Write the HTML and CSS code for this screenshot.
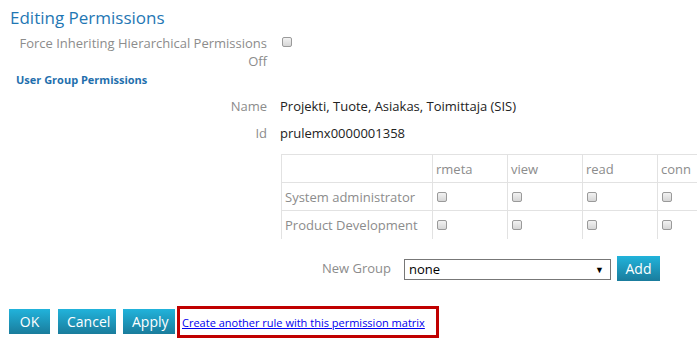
FILE: index.html
```html
<!DOCTYPE html>
<html lang="en">
<head>
  <meta charset="UTF-8" />
  <title>Editing Permissions</title>
  <link rel="stylesheet" href="styles.css">
</head>
<body>
  <div class="page">
    <h1>Editing Permissions</h1>
    <div class="field">
      <label class="label">Force Inheriting Hierarchical Permissions<br>Off</label>
      <div class="value"><input type="checkbox" class="chk"></div>
    </div>
    <h2>User Group Permissions</h2>
    <div class="field info">
      <span class="label">Name</span>
      <span class="value">Projekti, Tuote, Asiakas, Toimittaja (SIS)</span>
    </div>
    <div class="field info">
      <span class="label">Id</span>
      <span class="value">prulemx0000001358</span>
    </div>
    <div class="matrix-wrap">
      <table class="matrix">
        <tr>
          <th></th><th>rmeta</th><th>view</th><th>read</th><th>conn</th>
        </tr>
        <tr>
          <td>System administrator</td>
          <td><input type="checkbox" class="chk"></td>
          <td><input type="checkbox" class="chk"></td>
          <td><input type="checkbox" class="chk"></td>
          <td><input type="checkbox" class="chk"></td>
        </tr>
        <tr>
          <td>Product Development</td>
          <td><input type="checkbox" class="chk"></td>
          <td><input type="checkbox" class="chk"></td>
          <td><input type="checkbox" class="chk"></td>
          <td><input type="checkbox" class="chk"></td>
        </tr>
      </table>
      <div class="new-group">
        <span class="ng-label">New Group</span>
        <div class="select">none<span class="arrow">&#9660;</span></div>
        <button class="btn">Add</button>
      </div>
    </div>
    <div class="actions">
      <button class="btn">OK</button>
      <button class="btn">Cancel</button>
      <button class="btn">Apply</button>
      <div class="highlight"><a href="#">Create another rule with this permission matrix</a></div>
    </div>
  </div>
</body>
</html>
```

FILE: styles.css
```css
* { margin: 0; padding: 0; box-sizing: border-box; }
body {
  font-family: 'Open Sans', sans-serif;
  font-size: 13px;
  color: #333;
  background: #fff;
  overflow: hidden;
}
.page {
  padding: 6px 0 0 10px;
}
h1 {
  font-size: 17px;
  font-weight: 400;
  color: #1f77b4;
  line-height: 24px;
}
h2 {
  font-size: 11px;
  font-weight: 700;
  color: #1f6fad;
  margin: 2px 0 0 6px;
  line-height: 16px;
}
.field {
  display: grid;
  grid-template-columns: 257px 1fr;
  column-gap: 13px;
  margin-top: 4px;
}
.label {
  text-align: right;
  color: #8c8c8c;
  line-height: 18px;
}
.value { line-height: 18px; }
.info { margin-top: 9px; }
.info .value { color: #222; }
.chk {
  appearance: none;
  -webkit-appearance: none;
  width: 10px;
  height: 10px;
  border: 1px solid #9a9a9a;
  border-radius: 2px;
  background: linear-gradient(#f2f2f2, #d6d6d6);
  display: inline-block;
  vertical-align: middle;
  margin-left: 2px;
}
.field .chk { margin-top: -6px; }
.matrix-wrap {
  margin: 12px 0 0 271px;
}
.matrix {
  border-collapse: collapse;
  table-layout: fixed;
  width: 452px;
}
.matrix th, .matrix td {
  border: 1px solid #e2e2e2;
  height: 28px;
  width: 75px;
  padding: 0 3px;
  text-align: left;
  font-weight: 400;
  color: #8c8c8c;
  white-space: nowrap;
}
.matrix th:first-child, .matrix td:first-child { width: 151px; }
.matrix td .chk { margin-left: 1px; margin-top: -3px; }
.matrix tr:last-child td { border-bottom: none; }
.new-group {
  display: flex;
  align-items: center;
  margin: 17px 0 0 41px;
}
.ng-label {
  color: #8c8c8c;
  width: 70px;
  margin-right: 12px;
}
.select {
  width: 207px;
  height: 21px;
  border: 1px solid #777;
  color: #000;
  padding: 0 6px 0 4px;
  line-height: 19px;
  display: flex;
  justify-content: space-between;
  margin-top: 3px;
}
.arrow { font-size: 9px; }
.btn {
  font-family: 'Open Sans', sans-serif;
  font-size: 14px;
  color: #fff;
  border: none;
  background: linear-gradient(#21b3db, #1a7c9c);
  height: 25px;
  padding: 0 9px;
}
.new-group .btn { margin-left: 6px; width: 43px; padding: 0; }
.actions {
  display: flex;
  align-items: center;
  gap: 8px;
  margin: 25px 0 0 -1px;
}
.actions .btn:first-child { width: 41px; }
.actions .btn:nth-child(2) { width: 58px; }
.actions .btn:nth-child(3) { width: 52px; margin-left: -1px; }
.highlight {
  border: 3px solid #c00000;
  width: 262px;
  height: 32px;
  padding: 0 0 0 2px;
  line-height: 26px;
  margin-left: -6px;
}
.highlight a {
  color: #0000ee;
  font-size: 11px;
}
```
